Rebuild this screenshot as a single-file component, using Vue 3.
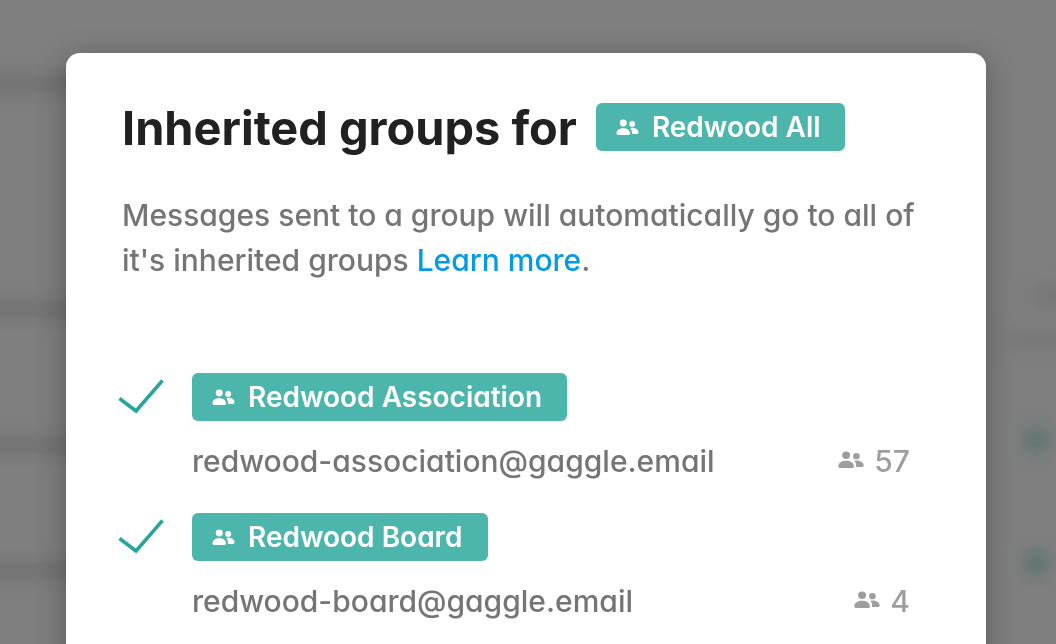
<script setup>
const groups = [
  { name: 'Redwood Association', email: 'redwood-association@gaggle.email', count: 57 },
  { name: 'Redwood Board', email: 'redwood-board@gaggle.email', count: 4 },
]
const people = 'M7.500 7.900a3.700 3.700 0 1 0 0-7.400 3.700 3.700 0 0 0 0 7.400Zm9.500.4a3.100 3.100 0 1 0 0-6.200 3.100 3.100 0 0 0 0 6.200ZM.3 15.200c0-3.400 3.600-5.400 7.200-5.400s7.200 2 7.200 5.400c0 1.100-.7 1.800-1.700 1.800H2c-1 0-1.700-.7-1.700-1.800Zm14.800-5.500c.6-.2 1.300-.3 1.900-.3 3.300 0 6.700 1.700 6.700 4.800 0 1-.6 1.800-1.600 1.800h-5.600c.2-.4.3-1 .3-1.500 0-1.900-.7-3.500-1.700-4.800Z'
</script>

<template>
  <div class="backdrop">
    <div class="blur-layer" aria-hidden="true">
      <i class="smear s1"></i><i class="smear s2"></i><i class="smear s3"></i><i class="smear s4"></i>
      <i class="smear s5"></i><i class="smear s6"></i>
      <i class="dot d1"></i><i class="dot d2"></i>
    </div>
    <section class="modal">
      <header class="title-row">
        <h1>Inherited groups for</h1>
        <span class="tag">
          <svg class="tag-icon" viewBox="0 0 24 17"><path :d="people" /></svg>
          <span>Redwood All</span>
        </span>
      </header>
      <p class="intro">
        Messages sent to a group will automatically go to all of it's inherited groups
        <a href="#" @click.prevent>Learn more</a>.
      </p>
      <ul class="groups">
        <li v-for="g in groups" :key="g.name" class="group">
          <svg class="check" viewBox="0 0 46 36"><path d="M1.500 19.500 18 32 44.500 1.500" /></svg>
          <div class="group-main">
            <span class="tag">
              <svg class="tag-icon" viewBox="0 0 24 17"><path :d="people" /></svg>
              <span>{{ g.name }}</span>
            </span>
            <div class="meta">
              <span class="email">{{ g.email }}</span>
              <span class="count">
                <svg class="count-icon" viewBox="0 0 24 17" preserveAspectRatio="none"><path :d="people" /></svg>
                <span>{{ g.count }}</span>
              </span>
            </div>
          </div>
        </li>
      </ul>
    </section>
  </div>
</template>

<style>
html, body { margin: 0; overflow: hidden; }
</style>

<style scoped>
.backdrop {
  position: relative;
  width: 1056px;
  height: 644px;
  overflow: hidden;
  background: #7f7f7f;
  font-family: Inter, "Liberation Sans", sans-serif;
  font-feature-settings: "cv11" 1;
}
.blur-layer { position: absolute; inset: 0; filter: blur(9px); }
.smear { position: absolute; height: 12px; background: #6b6b6b; }
.s1 { left: -20px; top: 78px; width: 100px; }
.s2 { left: -20px; top: 304px; width: 100px; }
.s3 { left: -20px; top: 440px; width: 100px; }
.s4 { left: -20px; top: 564px; width: 100px; }
.s5 { left: 1032px; top: 290px; width: 40px; background: #737373; }
.s6 { left: 1010px; top: 334px; width: 60px; background: #747474; }
.dot { position: absolute; width: 22px; height: 22px; border-radius: 50%; background: #4f6f6b; left: 1025px; }
.d1 { top: 429px; }
.d2 { top: 552px; }

.modal {
  position: relative;
  box-sizing: border-box;
  width: 920px;
  height: 640px;
  margin: 53px 0 0 66px;
  padding: 44px 56px 0;
  background: #fff;
  border-radius: 14px;
  box-shadow: 0 6px 30px rgba(0, 0, 0, 0.3);
}
.title-row { display: flex; align-items: center; gap: 19px; height: 62px; }
.title-row .tag { margin-top: -2px; padding-right: 24px; }
h1 {
  margin: 0;
  font-size: 46.900px;
  line-height: 62px;
  font-weight: 700;
  color: #212121;
}
.tag {
  display: inline-flex;
  align-items: center;
  gap: 13px;
  box-sizing: border-box;
  height: 48px;
  padding: 0 25px 0 20px;
  background: #4db6ac;
  border-radius: 6px;
  color: #fff;
  font-size: 28px;
  font-weight: 600;
  white-space: nowrap;
}
.tag-icon { width: 23px; height: 16px; fill: #fff; flex: none; }
.intro {
  margin: 34px 0 0;
  font-size: 30px;
  font-weight: 500;
  line-height: 45px;
  color: #757575;
}
.intro a { color: #039be5; text-decoration: none; }
.groups { list-style: none; margin: 90px 0 0; padding: 0 20px 0 0; display: flex; flex-direction: column; gap: 30px; }
.group { display: flex; align-items: flex-start; }
.check {
  width: 46px;
  height: 36px;
  margin: 6px 28px 0 -4px;
  flex: none;
  fill: none;
  stroke: #26a69a;
  stroke-width: 3.500;
}
.group-main { flex: 1; min-width: 0; }
.meta { display: flex; align-items: center; justify-content: space-between; margin-top: 18px; height: 44px; }
.email { font-size: 30px; font-weight: 500; color: #757575; }
.count { display: inline-flex; align-items: center; gap: 10px; font-size: 30px; font-weight: 500; color: #9e9e9e; }
.count-icon { width: 26px; height: 17px; fill: #9e9e9e; margin-top: -4px; }
</style>
